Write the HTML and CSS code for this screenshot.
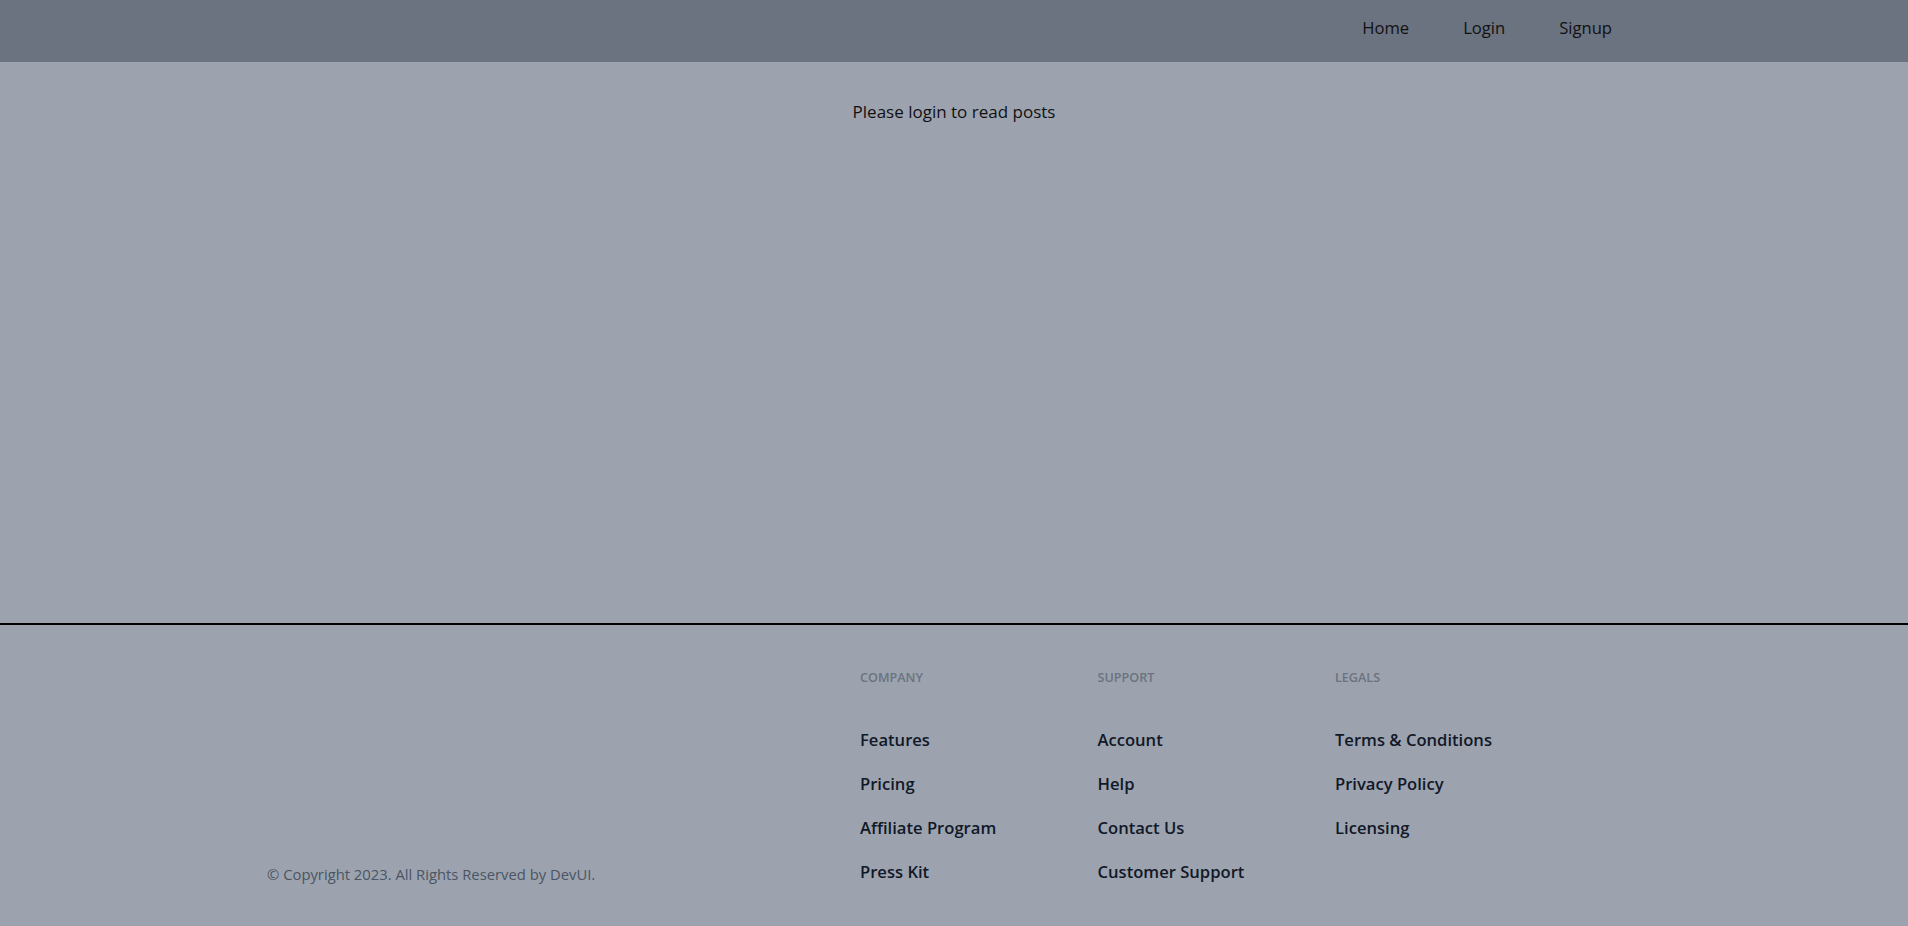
FILE: index.html
```html
<!DOCTYPE html>
<html lang="en">
<head>
<meta charset="utf-8">
<title>Posts</title>
<link rel="stylesheet" href="styles.css">
</head>
<body>
<header class="topbar">
  <nav class="nav">
    <a class="nav-link" href="#">Home</a>
    <a class="nav-link" href="#">Login</a>
    <a class="nav-link" href="#">Signup</a>
  </nav>
</header>
<main class="content">
  <p class="notice">Please login to read posts</p>
</main>
<footer class="footer">
  <div class="footer-inner">
    <p class="copyright">© Copyright 2023. All Rights Reserved by DevUI.</p>
    <div class="col">
      <h3 class="col-title">Company</h3>
      <ul class="links">
        <li><a href="#">Features</a></li>
        <li><a href="#">Pricing</a></li>
        <li><a href="#">Affiliate Program</a></li>
        <li><a href="#">Press Kit</a></li>
      </ul>
    </div>
    <div class="col">
      <h3 class="col-title">Support</h3>
      <ul class="links">
        <li><a href="#">Account</a></li>
        <li><a href="#">Help</a></li>
        <li><a href="#">Contact Us</a></li>
        <li><a href="#">Customer Support</a></li>
      </ul>
    </div>
    <div class="col">
      <h3 class="col-title">Legals</h3>
      <ul class="links">
        <li><a href="#">Terms &amp; Conditions</a></li>
        <li><a href="#">Privacy Policy</a></li>
        <li><a href="#">Licensing</a></li>
      </ul>
    </div>
  </div>
</footer>
</body>
</html>
```

FILE: styles.css
```css
* { box-sizing: border-box; }
html, body { margin: 0; padding: 0; }
body {
  background: #9ca3af;
  font-family: "Open Sans", "Noto Sans", sans-serif;
  color: #000;
}
a { text-decoration: none; color: inherit; }

.topbar {
  height: 62px;
  background: #6b7280;
  display: flex;
  justify-content: flex-end;
  align-items: center;
  padding-right: 296px;
}
.nav {
  display: flex;
  gap: 54px;
  align-items: center;
  padding-bottom: 6px;
}
.nav-link {
  font-size: 16.6px;
  line-height: 24px;
  color: #111;
}

.content {
  height: 561px;
  padding-top: 37px;
}
.notice {
  margin: 0;
  text-align: center;
  font-size: 17px;
  line-height: 26px;
  color: #111;
}

.footer {
  border-top: 2px solid #000;
  padding: 45px 0 42px;
}
.footer-inner {
  display: grid;
  grid-template-columns: 593px 237.5px 237.5px 237.5px;
  padding-left: 267px;
}
.copyright {
  margin: 0;
  align-self: end;
  font-size: 14.8px;
  line-height: 20px;
  color: #4b5563;
}
.col { align-self: start; }
.col-title {
  margin: 0;
  font-size: 12.6px;
  line-height: 16px;
  font-weight: 600;
  text-transform: uppercase;
  color: #6b7280;
}
.links {
  list-style: none;
  margin: 42px 0 0;
  padding: 0;
  display: flex;
  flex-direction: column;
  gap: 20px;
}
.links li {
  font-size: 16.6px;
  line-height: 24px;
  font-weight: 600;
  color: #111827;
}
```
